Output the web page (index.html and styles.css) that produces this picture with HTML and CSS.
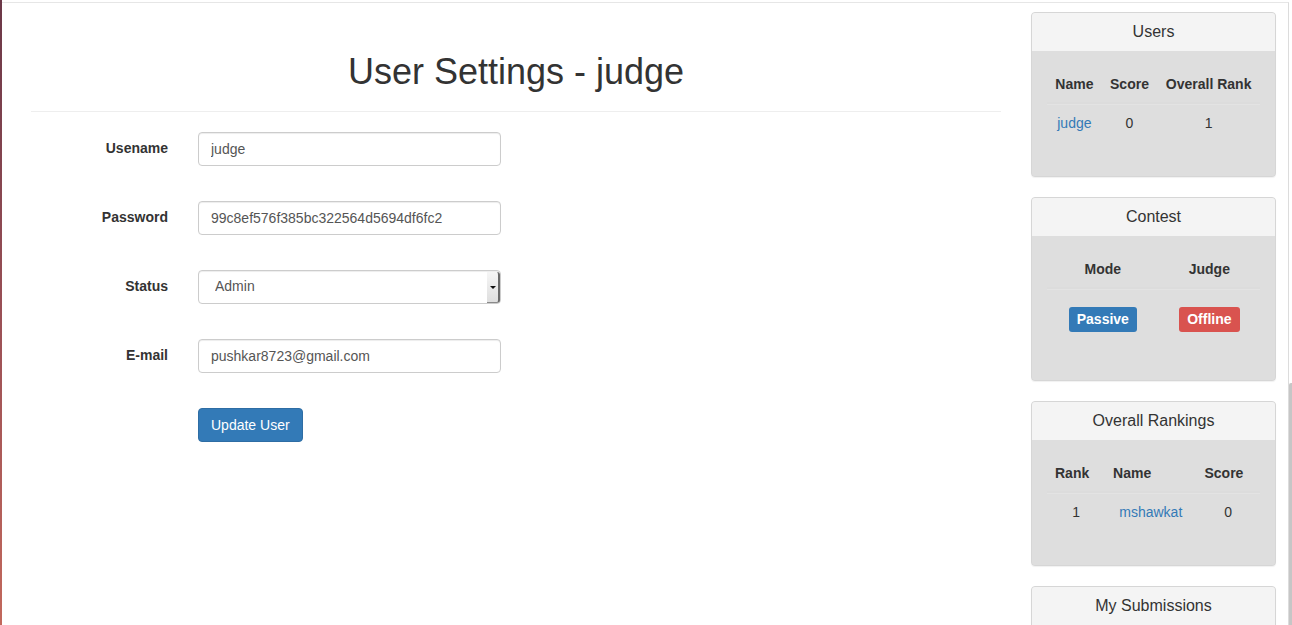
FILE: index.html
```html
<!DOCTYPE html>
<html>
<head>
<meta charset="utf-8">
<title>User Settings - judge</title>
<link rel="stylesheet" href="styles.css">
</head>
<body>
<div class="page">
  <div class="edge"></div>
  <div class="frame">
    <main class="main">
      <h1 class="page-title">User Settings - judge</h1>
      <form class="form">
        <div class="row">
          <label class="lbl">Usename</label>
          <input class="ctl" type="text" value="judge">
        </div>
        <div class="row">
          <label class="lbl">Password</label>
          <input class="ctl" type="text" value="99c8ef576f385bc322564d5694df6fc2">
        </div>
        <div class="row">
          <label class="lbl">Status</label>
          <div class="select-wrap">
            <select class="ctl sel">
              <option>Admin</option>
              <option>User</option>
            </select>
            <span class="sel-arrow"></span>
          </div>
        </div>
        <div class="row">
          <label class="lbl">E-mail</label>
          <input class="ctl" type="text" value="pushkar8723@gmail.com">
        </div>
        <div class="row">
          <span class="lbl"></span>
          <div><button class="btn" type="button">Update User</button></div>
        </div>
      </form>
    </main>
    <aside class="side">
      <section class="panel">
        <div class="panel-head">Users</div>
        <div class="panel-body">
          <table class="tbl center">
            <thead><tr><th>Name</th><th>Score</th><th>Overall Rank</th></tr></thead>
            <tbody><tr><td><a href="#">judge</a></td><td>0</td><td>1</td></tr></tbody>
          </table>
        </div>
      </section>
      <section class="panel">
        <div class="panel-head">Contest</div>
        <div class="panel-body">
          <table class="tbl center">
            <thead><tr><th>Mode</th><th>Judge</th></tr></thead>
            <tbody><tr>
              <td><div class="badge-wrap"><span class="badge blue">Passive</span></div></td>
              <td><div class="badge-wrap"><span class="badge red">Offline</span></div></td>
            </tr></tbody>
          </table>
        </div>
      </section>
      <section class="panel">
        <div class="panel-head">Overall Rankings</div>
        <div class="panel-body">
          <table class="tbl">
            <thead><tr><th>Rank</th><th>Name</th><th>Score</th></tr></thead>
            <tbody><tr><td>1</td><td><a href="#">mshawkat</a></td><td>0</td></tr></tbody>
          </table>
        </div>
      </section>
      <section class="panel">
        <div class="panel-head">My Submissions</div>
        <div class="panel-body tall"></div>
      </section>
    </aside>
  </div>
  <div class="scroll"><div class="thumb"></div></div>
</div>
</body>
</html>
```

FILE: styles.css
```css
html, body {
  margin: 0;
  padding: 0;
  height: 625px;
  overflow: hidden;
  background: #fff;
}
body {
  font-family: "Liberation Sans", Arial, Helvetica, sans-serif;
  font-size: 14px;
  line-height: 20px;
  color: #333;
}
.page {
  display: flex;
  height: 625px;
}
.edge {
  width: 2px;
  flex: none;
  background: linear-gradient(#6b3848, #9a5056 50%, #c2685c);
}
.frame {
  flex: 1;
  display: flex;
  align-items: flex-start;
  margin-top: 2px;
  border-top: 1px solid #e6e6e6;
  border-right: 1px solid #dcdcdc;
}
.main {
  margin-left: 29px;
  width: 970px;
  flex: none;
}
.page-title {
  margin: 49px 0 0;
  padding-bottom: 19px;
  border-bottom: 1px solid #eee;
  font-size: 36px;
  line-height: 40px;
  font-weight: 500;
  text-align: center;
  color: #333;
}
.form {
  margin-top: 20px;
}
.row {
  display: grid;
  grid-template-columns: 137px 303px;
  column-gap: 30px;
  margin-bottom: 35px;
}
.lbl {
  text-align: right;
  font-weight: bold;
  padding-top: 6px;
  line-height: 20px;
}
.ctl {
  box-sizing: border-box;
  width: 303px;
  height: 34px;
  padding: 6px 12px 7px;
  font-family: inherit;
  font-size: 14px;
  line-height: 19px;
  color: #555;
  background: #fff;
  border: 1px solid #ccc;
  border-radius: 4px;
  box-shadow: inset 0 1px 1px rgba(0,0,0,.075);
  outline: none;
  margin: 0;
}
.select-wrap {
  position: relative;
  width: 303px;
  height: 34px;
}
.sel {
  appearance: none;
  -webkit-appearance: none;
  padding-left: 16px;
}
.sel-arrow {
  position: absolute;
  right: 1px;
  top: 2px;
  bottom: 1px;
  width: 11px;
  background: linear-gradient(#f6f6f6, #dedede);
  border-right: 2px solid #6a6a6a;
  border-bottom: 1px solid #8a8a8a;
  border-radius: 0 3px 3px 0;
}
.sel-arrow::after {
  content: "";
  position: absolute;
  left: 3px;
  top: 14px;
  border-left: 3px solid transparent;
  border-right: 3px solid transparent;
  border-top: 3px solid #111;
}
.btn {
  height: 34px;
  padding: 6px 12px;
  font-family: inherit;
  font-size: 14px;
  line-height: 20px;
  color: #fff;
  background: #337ab7;
  border: 1px solid #2e6da4;
  border-radius: 4px;
  cursor: pointer;
}
.side {
  margin-left: 30px;
  width: 245px;
  flex: none;
  padding-top: 9px;
}
.panel {
  border: 1px solid #d6d6d6;
  border-radius: 4px;
  box-shadow: 0 1px 1px rgba(0,0,0,.06);
  margin-bottom: 20px;
  overflow: hidden;
  background: #ddd;
}
.panel-head {
  background: #f4f4f4;
  padding: 10px 15px;
  font-size: 16px;
  line-height: 18px;
  text-align: center;
  color: #333;
}
.panel-body {
  padding: 15px;
  background: #dedede;
}
.panel-body.tall {
  height: 100px;
}
.tbl {
  width: 100%;
  border-collapse: separate;
  border-spacing: 0;
  margin-bottom: 20px;
}
.tbl th {
  padding: 8px;
  line-height: 20px;
  font-weight: bold;
  text-align: left;
  border-bottom: 2px solid #dcdcdc;
  white-space: nowrap;
}
.tbl td {
  padding: 8px;
  line-height: 20px;
  text-align: center;
  border-top: 1px solid #e3e3e3;
  white-space: nowrap;
}
.tbl.center th {
  text-align: center;
}
.tbl a {
  color: #337ab7;
  text-decoration: none;
}
.badge-wrap {
  display: flex;
  justify-content: center;
  padding: 9px 0 5px;
}
.badge {
  display: inline-block;
  padding: 3px 8px 4px;
  line-height: 18px;
  font-size: 14px;
  font-weight: bold;
  color: #fff;
  border-radius: 3px;
}
.badge.blue { background: #337ab7; }
.badge.red { background: #d9534f; }
.scroll {
  width: 3px;
  flex: none;
  position: relative;
}
.thumb {
  position: absolute;
  top: 383px;
  left: 0;
  right: 0;
  bottom: 0;
  background: #c6c6c6;
  border-radius: 2px 0 0 0;
}
```
